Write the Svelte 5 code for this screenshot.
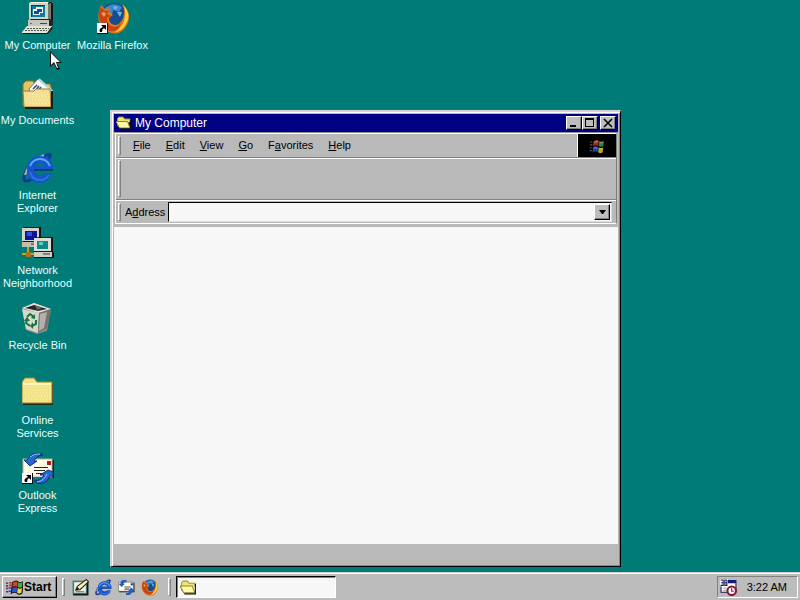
<script>
    const shortcuts = [
        { icon: 'computer', label: 'My Computer' },
        { icon: 'documents', label: 'My Documents' },
        { icon: 'ie', label: 'Internet\nExplorer' },
        { icon: 'network', label: 'Network\nNeighborhood' },
        { icon: 'bin', label: 'Recycle Bin' },
        { icon: 'folder', label: 'Online\nServices' },
        { icon: 'outlook', label: 'Outlook\nExpress', link: true },
        { icon: 'firefox', label: 'Mozilla Firefox', link: true }
    ];

    // [before, accelerator key, after]
    const menus = [
        ['', 'F', 'ile'],
        ['', 'E', 'dit'],
        ['', 'V', 'iew'],
        ['', 'G', 'o'],
        ['F', 'a', 'vorites'],
        ['', 'H', 'elp']
    ];

    const quickLaunch = [
        { icon: 'desktop', label: 'Show Desktop' },
        { icon: 'ie', label: 'Internet Explorer' },
        { icon: 'mail', label: 'Outlook Express' },
        { icon: 'firefox', label: 'Mozilla Firefox' }
    ];

    let address = $state('');
</script>

{#snippet flag()}
    <path d="M13 7 Q18 3 22 6 L21 15 Q17 12 12 15Z" fill="#d8402c" />
    <path d="M23 6 Q27 9 31 6 L30 15 Q26 18 22 15Z" fill="#3fae49" />
    <path d="M12 17 Q17 14 21 17 L20 26 Q16 23 11 26Z" fill="#2f55d4" />
    <path d="M22 17 Q26 20 30 17 L29 26 Q25 29 21 26Z" fill="#f0d838" />
{/snippet}

{#snippet picture(name, size, link = false)}
    <svg width={size} height={size} viewBox="0 0 32 32" aria-hidden="true">
        {#if name === 'computer'}
            <path d="M7 1 L10 0 H29 L31 2 V18 L27 21 H7Z" fill="#151515" />
            <path d="M7 1 L9 0 H27 L25 2 H7Z" fill="#f2f2e8" />
            <path d="M26 2 L29 1 V18 L26 20Z" fill="#77776f" />
            <rect x="7" y="1" width="19" height="18" fill="#d3d2c6" />
            <rect x="9" y="3" width="14" height="12" fill="#333" />
            <rect x="10" y="4" width="13" height="11" fill="#0c7c98" />
            <path d="M11 7 H18 V13 H11Z M14 5 H21 V11 H14Z" fill="#f4f4f4" />
            <path d="M12 9 H17 V12 H12Z M15 7 H20 V10 H15Z" fill="#1c45aa" />
            <path d="M6 19 L9 17 H28 L31 19 V23 L27 25 H6Z" fill="#222" />
            <rect x="6" y="18" width="21" height="6" fill="#c6c5b9" />
            <path d="M18 21 H25 V22 H18Z" fill="#444" />
            <rect x="8" y="21" width="2" height="1" fill="#2a9a38" />
            <path d="M0 30 L5 25 H29 L31 26 L26 32 H1Z" fill="#1b1b1b" />
            <path d="M0 30 L5 24 H30 L25 31 H0Z" fill="#e4e3d8" />
            <path d="M5 26.5 H27 M3 28.5 H25" stroke="#55554f" stroke-dasharray="2 1" />
        {:else if name === 'documents'}
            <path d="M1 7 L4 4 H11 L13 7 H28 L30 13 V28 H1Z" fill="#e3c661" stroke="#94702a" />
            <path d="M7 12 L16 2 L29 13 L23 19 H9Z" fill="#f8f8f8" stroke="#777" />
            <path d="M17 2 L30 14 L27 17" fill="none" stroke="#a9dcdc" stroke-width="2" />
            <path d="M11 12 L15 8 M14 13 L17 9 M17 13 L19 10 M21 14 L22 12" stroke="#274690" stroke-width="1.5" />
            <path d="M1 14 H12 L14 12 H28 L29 30 H2Z" fill="#f3df93" stroke="#a47c30" />
            <path d="M3 31 H30 V14" fill="none" stroke="#15201a" stroke-width="2" />
            <path d="M4 17 H27 M5 20 H28 M4 23 H27 M5 26 H28" stroke="#fff5b2" stroke-dasharray="1 2" />
        {:else if name === 'ie'}
            <path d="M25 9 Q33 -1 22 4 Q4 13 2 25 Q1 32 10 27" fill="none" stroke="#15379b" stroke-width="3" />
            <path d="M22 3 Q6 11 3 23" fill="none" stroke="#b6a9ae" stroke-width="2" />
            <path d="M31 18 H13 Q13 23 18 23 Q22 23 23 21 H30 Q27 31 17 31 Q5 30 5 17 Q6 4 18 4 Q32 5 31 18Z M13 14 H23 Q22 11 18 11 Q14 11 13 14Z" fill="#1654cc" fill-rule="evenodd" />
            <path d="M8 14 Q11 7 18 7 Q25 7 28 14" fill="none" stroke="#58aaf2" stroke-width="2" />
            <path d="M8 20 Q10 28 18 28 Q24 28 27 23" fill="none" stroke="#2b74dc" stroke-width="2" />
            <path d="M12 18 H31" stroke="#061b5e" />
        {:else if name === 'network'}
            <path d="M2 0 H19 V16 L16 20 H1 V1Z" fill="#171717" />
            <rect x="0" y="1" width="17" height="13" fill="#d4d3c8" />
            <rect x="3" y="4" width="12" height="9" fill="#0d159e" />
            <path d="M5 5 H10 V9 H5Z" fill="#304fe0" />
            <rect x="0" y="15" width="16" height="5" fill="#bfbeb4" />
            <path d="M9 17 H15" stroke="#333" />
            <path d="M14 11 L16 10 H31 V25 L32 26 V31 H12 V13Z" fill="#171717" />
            <rect x="12" y="11" width="17" height="13" fill="#dfded4" />
            <rect x="15" y="14" width="11" height="8" fill="#0b8b88" />
            <path d="M17 15 H21 V18 H17Z" fill="#68c7c0" />
            <rect x="12" y="25" width="18" height="5" fill="#d0cfc4" />
            <path d="M21 27 H28" stroke="#333" />
            <path d="M6 20 V27 H12 M0 27 H8" fill="none" stroke="#c6a028" stroke-width="2" />
            <rect x="4" y="25" width="5" height="5" fill="#a77618" />
        {:else if name === 'bin'}
            <path d="M0 6 L12 1 L29 7 L25 29 L15 32 L4 28Z" fill="#8b8c88" />
            <path d="M0 6 L12 1 L29 7 L16 11Z" fill="#e5e5df" />
            <path d="M3 6 L12 3 L25 7 L16 9Z" fill="#26282a" />
            <path d="M13 3 L20 6 L15 8Z" fill="#75686d" />
            <path d="M0 7 L17 11 L16 31 L4 27Z" fill="#d6d6ce" />
            <path d="M17 11 L29 7 L25 26 L16 31Z" fill="#73736f" />
            <path d="M18 12 L25 10 L22 26 L17 29Z" fill="#b1b0aa" />
            <g fill="none" stroke="#16753a" stroke-width="2">
                <path d="M5 15 L8 12 L12 15" />
                <path d="M14 18 L14 22 L10 24" />
                <path d="M8 24 L4 21 L5 18" />
            </g>
            <path d="M13 12 V17 L9 16Z M11 20 V27 L8 24Z M2 19 L5 15 L8 19Z" fill="#16753a" />
        {:else if name === 'folder'}
            <path d="M1 6 L3 2 H13 L16 6 H31 V28 H1Z" fill="#282817" />
            <path d="M0 26 V5 L3 1 H12 L15 5 H30 V26Z" fill="#f2e38a" stroke="#9d873b" />
            <path d="M1 7 H29" stroke="#fff8b9" stroke-width="2" />
            <path d="M3 10 H28 M4 13 H29 M3 16 H28 M4 19 H29 M3 22 H28" stroke="#fff4a5" stroke-dasharray="1 2" />
        {:else if name === 'open-folder'}
            <path d="M3 22 V7 L6 4 H14 L17 8 H28 V14" fill="#f0e570" stroke="#a39538" stroke-width="2" />
            <path d="M0 13 H23 L28 26 H7Z" fill="#fff9a8" stroke="#8d8030" stroke-width="2" />
            <path d="M29 9 V28 H8" fill="none" stroke="#111" stroke-width="2" />
        {:else if name === 'outlook'}
            <rect x="2" y="8" width="30" height="18" fill="#17201c" />
            <rect x="1" y="7" width="29" height="18" fill="#fffbe8" stroke="#b8ad94" />
            <rect x="25" y="9" width="4" height="4" fill="#bd1913" />
            <path d="M12 15.5 H26 M12 18.5 H23 M14 21.5 H25" stroke="#23231d" />
            <path d="M21 3 Q14 -1 8 4 L5 8 H2 L8 14 L15 9 H12 Q15 3 21 3Z" fill="#2867cf" stroke="#0a2f80" />
            <path d="M8 5 Q12 1 18 2" fill="none" stroke="#8bc5fa" />
            <path d="M12 29 Q18 34 25 29 L28 24 H31 V20 L26 18 L18 23 H22 Q19 29 12 29Z" fill="#2867cf" stroke="#0a2f80" />
            <path d="M15 30 Q22 29 25 22" fill="none" stroke="#8bc5fa" />
        {:else if name === 'mail'}
            <path d="M2 7 H31 V25 H2Z" fill="#1b2430" />
            <path d="M1 6 H29 V23 H1Z" fill="#fffdf0" stroke="#55555f" />
            <rect x="24" y="8" width="4" height="4" fill="#27349a" />
            <path d="M12 15 H24 M12 19 H21" stroke="#555" stroke-width="2" />
            <path d="M16 2 H9 Q4 4 5 9 H1 L7 15 L13 9 H10 Q10 6 16 5Z" fill="#1f5ec8" />
            <path d="M15 30 H22 Q27 28 27 22 H31 L25 16 L19 22 H22 Q22 26 15 27Z" fill="#1f5ec8" />
        {:else if name === 'firefox'}
            <circle cx="17" cy="15" r="14" fill="#164c90" />
            <path d="M8 6 Q17 -1 25 5 L22 10 L16 8 L15 13 L8 12Z" fill="#398bcc" />
            <path d="M16 4 L21 5 L18 8 Z M20 10 L25 10 L23 15Z" fill="#70bbe5" />
            <path d="M25 2 Q36 11 30 23 Q23 36 9 29 Q-1 22 2 9 L4 3 L8 7 L13 6 L12 10 L16 13 L12 16 Q12 23 19 23 Q26 21 27 12 Q28 7 25 2Z" fill="#e47718" />
            <path d="M2 10 L4 5 L8 9 L12 8 L10 12 L14 14 L10 16 Q10 24 17 25 Q22 25 24 20 Q22 31 13 29 Q1 25 2 10Z" fill="#c84316" />
            <path d="M26 3 Q35 12 29 22 Q25 29 18 30 Q27 24 28 15 Q29 8 26 3Z" fill="#f7d43a" />
            <path d="M4 11 L7 10 L9 12 L7 15Z" fill="#f29a50" />
        {:else if name === 'desktop'}
            <path d="M2 4 H31 V31 H2Z" fill="#141414" />
            <path d="M1 3 H28 V28 H1Z" fill="#3c8187" />
            <path d="M4 6 H26 V26 H4Z" fill="#f4f1e1" />
            <path d="M7 21 L10 14 L27 1 L31 5 L15 20Z" fill="#fff4b4" stroke="#2d2921" stroke-width="2" />
            <path d="M7 21 L10 15 L14 19Z" fill="#121212" />
            <path d="M7 24 H23" stroke="#3e8c48" stroke-width="2" />
        {:else if name === 'windows'}
            <path d="M12 7 Q18 2 22 5 Q27 9 32 5 L30 27 Q25 31 20 26 Q15 23 10 27Z" fill="#111" stroke="#111" stroke-width="2" />
            {@render flag()}
            <path d="M0 8 H4 M6 7 H10 M0 13 H4 M6 12 H10" stroke="#a72a22" stroke-width="3" />
            <path d="M0 18 H4 M5 17 H9 M0 24 H4 M5 23 H9" stroke="#2836a0" stroke-width="3" />
        {:else if name === 'scheduler'}
            <rect x="2" y="3" width="28" height="22" fill="#fff" stroke="#17205b" stroke-width="2" />
            <rect x="14" y="2" width="16" height="6" fill="#101c75" />
            <path d="M0 0 H15 V14 H0Z" fill="#fff" />
            <path d="M1 2 H6 V12 H1 M2 7 H6 M13 2 H9 V12 H13 V2 M9 7 H13" fill="none" stroke="#141b63" stroke-width="2" />
            <path d="M6 17 H12 M6 21 H12" stroke="#999" stroke-width="2" />
            <circle cx="22" cy="22" r="8" fill="#fff" stroke="#8c142e" stroke-width="4" />
            <path d="M22 17 V23 H26" fill="none" stroke="#8c142e" stroke-width="2" />
        {/if}
        {#if link}
            <rect x="0" y="21" width="11" height="11" fill="#111" />
            <rect x="0" y="21" width="10" height="10" fill="#fff" />
            <path d="M4 23 H9 V28 L7 26 Q5 27 5 30 H3 Q1 27 6 25Z" fill="#000" />
        {/if}
    </svg>
{/snippet}

<div class="screen">
    <main class="desktop">
        <div class="shortcuts">
            {#each shortcuts as item}
                <button class="shortcut">
                    {@render picture(item.icon, 32, item.link)}
                    <span>{item.label}</span>
                </button>
            {/each}
        </div>

        <section class="window" aria-label="My Computer">
            <header class="titlebar">
                {@render picture('open-folder', 16)}
                <h1>My Computer</h1>
                <div class="controls">
                    <button class="control" aria-label="Minimize">
                        <svg width="12" height="10" viewBox="0 0 12 10"><path d="M2 7 H8 V9 H2Z" /></svg>
                    </button>
                    <button class="control" aria-label="Maximize">
                        <svg width="12" height="10" viewBox="0 0 12 10"><path d="M1 0 H10 V9 H1Z M2 2 V8 H9 V2Z" fill-rule="evenodd" /></svg>
                    </button>
                    <button class="control close" aria-label="Close">
                        <svg width="12" height="10" viewBox="0 0 12 10"><path d="M2 1 L10 9 M10 1 L2 9" stroke="#000" stroke-width="1.6" /></svg>
                    </button>
                </div>
            </header>

            <div class="bands">
                <div class="band menu-band">
                    <span class="grip"></span>
                    <nav>
                        {#each menus as [before, key, after]}
                            <button>{before}<u>{key}</u>{after}</button>
                        {/each}
                    </nav>
                    <div class="throbber">
                        <svg width="20" height="16" viewBox="4 1 30 28">
                            <g opacity="0.75">
                                {@render flag()}
                            </g>
                            <path d="M7 8 H11 M7 13 H11" stroke="#96452f" stroke-width="2" />
                            <path d="M6 18 H10 M6 23 H10" stroke="#3b539c" stroke-width="2" />
                            <path d="M14 9 Q18 6 21 8 M24 9 Q27 10 30 8 M13 19 Q17 17 20 19 M23 20 Q26 21 29 19" fill="none" stroke="#d8d2c4" />
                        </svg>
                    </div>
                </div>
                <div class="band tool-band">
                    <span class="grip"></span>
                </div>
                <div class="band address-band">
                    <span class="grip"></span>
                    <label for="address">A<u>d</u>dress</label>
                    <div class="combo">
                        <input id="address" type="text" bind:value={address} />
                        <button aria-label="Show addresses">
                            <svg width="7" height="4" viewBox="0 0 7 4"><path d="M0 0 H7 L4 4 H3Z" /></svg>
                        </button>
                    </div>
                </div>
            </div>

            <div class="content"></div>
            <footer class="status"></footer>
        </section>

        <svg class="cursor" width="12" height="20" viewBox="0 0 12 20" aria-hidden="true">
            <path d="M0 0 V16 L4 13 L7 19 L10 18 L7 12 H12Z" fill="#111" />
            <path d="M1 2 V14 L4 11 L7 17 L8 17 L6 11 H10Z" fill="#fff" />
        </svg>
    </main>

    <footer class="taskbar">
        <button class="start">
            {@render picture('windows', 17)}
            Start
        </button>
        <span class="grip"></span>
        <div class="quick">
            {#each quickLaunch as item}
                <button aria-label={item.label}>{@render picture(item.icon, 17)}</button>
            {/each}
        </div>
        <span class="grip"></span>
        <button class="task" aria-label="My Computer">
            {@render picture('open-folder', 17)}
        </button>
        <div class="tray">
            {@render picture('scheduler', 17)}
            <time>3:22 AM</time>
        </div>
    </footer>
</div>

<style>
    :global(body) {
        margin: 0;
    }

    .screen {
        display: flex;
        flex-direction: column;
        height: 100vh;
        font-family: 'Liberation Sans', Arial, sans-serif;
        font-size: 11px;
        line-height: 13px;
        color: #000;
        background: #007b77;
        overflow: hidden;
    }

    svg {
        display: block;
        flex: none;
    }

    button {
        box-sizing: border-box;
        margin: 0;
        padding: 0;
        border: 0;
        font: inherit;
        color: inherit;
        background: none;
    }

    .desktop {
        position: relative;
        flex: 1;
        min-height: 0;
    }

    .shortcuts {
        display: grid;
        grid-template-rows: repeat(auto-fill, 75px);
        grid-auto-columns: 75px;
        grid-auto-flow: column;
        height: 100%;
    }

    .shortcut {
        display: flex;
        flex-direction: column;
        align-items: center;
        gap: 5px;
        padding-top: 2px;
        color: #e8ffff;
        white-space: pre;
        text-align: center;
    }

    .cursor {
        position: absolute;
        left: 50px;
        top: 51px;
    }

    .window {
        position: absolute;
        inset: 110px 179px 5px 110px;
        display: flex;
        flex-direction: column;
        box-sizing: border-box;
        padding: 2px;
        border: solid;
        border-width: 2px 1px 1px 2px;
        border-color: #d4d4d4 #000 #000 #d4d4d4;
        box-shadow: inset 1px 1px #fff, inset -1px -1px #888;
        background: #b9b9b9;
    }

    .titlebar {
        display: flex;
        align-items: center;
        gap: 3px;
        height: 18px;
        padding: 0 2px;
        color: #fff;
        background: #000082;
    }

    h1 {
        flex: 1;
        margin: 0;
        font-size: 12px;
        font-weight: normal;
    }

    .controls {
        display: flex;
    }

    .control {
        display: grid;
        place-items: center;
        width: 16px;
        height: 14px;
    }

    .control,
    .combo button,
    .start {
        border: 1px solid;
        border-color: #fff #000 #000 #fff;
        box-shadow: inset -1px -1px #808080;
        background: #bdbdbd;
    }

    .close {
        margin-left: 2px;
    }

    .bands {
        margin: 1px 1px 0;
        border: 1px solid #fff;
        border-right-color: #808080;
        box-shadow: 0 -1px #909090;
    }

    .band {
        display: flex;
        align-items: center;
        padding-left: 2px;
    }

    .band + .band {
        border-top: 1px solid #808080;
        box-shadow: inset 0 1px #fff;
    }

    .grip {
        box-sizing: border-box;
        align-self: stretch;
        width: 3px;
        margin: 2px 0;
        border: 1px solid;
        border-color: #fff #808080 #808080 #fff;
    }

    .menu-band {
        height: 23px;
    }

    .tool-band {
        height: 41px;
    }

    .address-band {
        height: 22px;
        padding-top: 1px;
        padding-right: 4px;
    }

    nav {
        display: flex;
        flex: 1;
        gap: 15px;
        padding-left: 12px;
    }

    u {
        text-underline-offset: 1px;
    }

    .throbber {
        display: grid;
        place-items: center;
        align-self: stretch;
        width: 38px;
        border-left: 1px solid #fff;
        background: #000;
    }

    label {
        margin: 0 3px 0 4px;
    }

    .combo {
        display: flex;
        flex: 1;
        box-sizing: border-box;
        height: 20px;
        padding: 1px;
        border: 1px solid;
        border-color: #000 #dedede #dedede #000;
        background: #f7f7f7;
    }

    input {
        flex: 1;
        min-width: 0;
        padding: 0 2px;
        border: 0;
        outline: 0;
        font: inherit;
        background: none;
    }

    .combo button {
        display: grid;
        place-items: center;
        width: 16px;
    }

    .content {
        flex: 1;
        margin-top: 3px;
        background: #f7f7f7;
    }

    .status {
        height: 20px;
    }

    .taskbar {
        display: flex;
        box-sizing: border-box;
        height: 28px;
        padding: 3px 2px 2px;
        border-top: 1px solid #d0d0d0;
        box-shadow: inset 0 1px #fff;
        background: #bcbcbc;
    }

    .start {
        display: flex;
        align-items: center;
        gap: 1px;
        width: 55px;
        padding-left: 3px;
        font-size: 12px;
        font-weight: bold;
    }

    .taskbar .grip {
        margin: 2px 5px;
    }

    .quick {
        display: flex;
        align-items: center;
        gap: 6px;
        padding: 0 5px 0 2px;
    }

    .task {
        display: flex;
        align-items: center;
        width: 160px;
        padding-left: 3px;
        border: 1px solid;
        border-color: #000 #fff #fff #000;
        box-shadow: inset 1px 1px #808080;
        background: #f7f7f7;
    }

    .tray {
        display: flex;
        align-items: center;
        gap: 10px;
        margin-left: auto;
        padding: 0 10px 0 2px;
        border: 1px solid;
        border-color: #808080 #fff #fff #808080;
    }
</style>
